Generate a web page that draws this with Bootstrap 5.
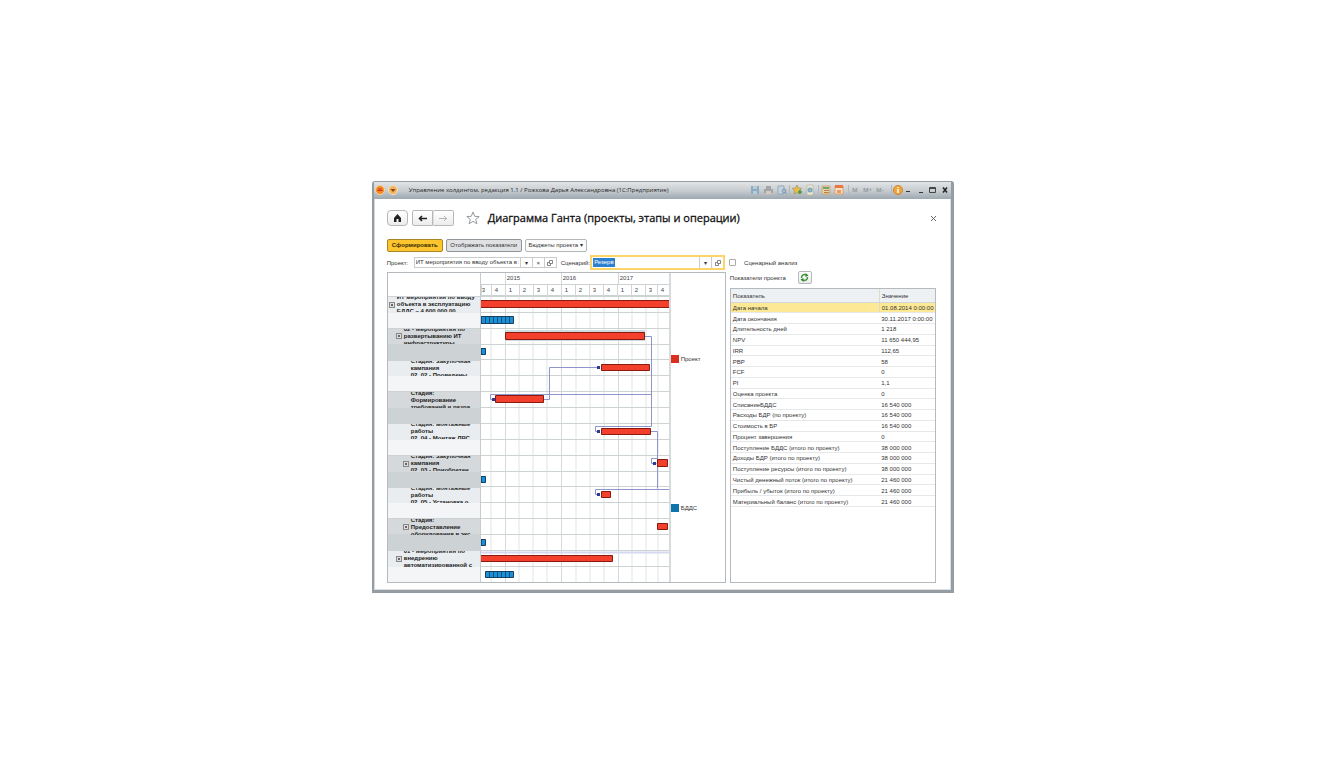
<!DOCTYPE html>
<html lang="ru">
<head>
<meta charset="utf-8">
<meta name="viewport" content="width=device-width, initial-scale=1">
<title>Диаграмма Ганта</title>
<link href="https://cdn.jsdelivr.net/npm/bootstrap@5.3.0/dist/css/bootstrap.min.css" rel="stylesheet">
<script src="https://cdn.jsdelivr.net/npm/bootstrap@5.3.0/dist/js/bootstrap.bundle.min.js"></script>
<style>
body{font:6px/8px "Liberation Sans",Arial,sans-serif;color:#333;background:#fff;padding:2px 0 0 2px}
svg{display:block;flex:none}
button,input{font:inherit;color:inherit}
.win{width:44vw;min-width:582px;border:solid #959da3;border-width:1px 3px 3px 2px;border-radius:3px 3px 0 0;background:#fff;box-shadow:inset -1px -1px #dcdfe1,inset 1px 0 #d5d9dc}
.titlebar{height:17px;padding:0 0 2px 1px;background:linear-gradient(#e2e4e5,#c8cdd1 50%,#9da8b0);color:#222;font-family:"Open Sans","Liberation Sans",sans-serif}
.titlebar button,.plain{border:0;background:none;padding:0}
.page-body{padding:11px 15px 7px 13px}
.tool{height:16px;border:1px solid #b5b9bb;border-radius:2px;background:linear-gradient(#fff,#ececec);padding:0}
.nav-l{width:21px;border-radius:2px 0 0 2px}
.nav-r{width:21px;border-left-color:#ddd;border-radius:0 2px 2px 0}
h1{font-family:"Open Sans","Liberation Sans",sans-serif;font-size:11px;line-height:16px;color:#111;-webkit-text-stroke:.3px #111}
.cmd{height:13px;line-height:11px;border:1px solid #b3b7b9;border-radius:2px;background:#fbfbfb;padding:0 2px;white-space:nowrap}
.cmds{gap:3px;padding-top:13px;margin-bottom:3px}
.cmd-main{width:56px;background:#fdc62f;border-color:#a98524;color:#3a2c00;font-weight:bold}
.cmd-on{width:76px;background:#dfe1e2;border-color:#8f9599}
.cmd-menu{width:62px}
.fieldrow{height:15px;margin-bottom:2px}
.left-col{flex:338 1 0;min-width:0}
.right-col{flex:207 1 0;min-width:0}
.box{height:11px;border:1px solid #c9cccd}
.box input{border:0;outline:0;padding:0 1px;min-width:0;background:none;height:9px;line-height:9px}
.box button{width:12px;border:0;border-left:1px solid #ccc;background:none;padding:0}
.box-active{height:15px;border:2px solid #fbd56a}
.box-active input.picked{height:9px;width:22px;margin:1px;background:#2d7fd0;color:#fff}
.tick{appearance:none;width:7px;height:7px;border:1px solid #aaa;border-radius:1px;margin:0;background:#fff}
.frame{border:1px solid #b4babd}
.names{width:93px;border-right:1px solid #c5cbce}
.names-body,.chart-body{height:286px}
.names-body{display:grid;grid-template-rows:repeat(9,1fr);font-weight:bold;line-height:7px;color:#222}
.grp{background:linear-gradient(#e9edf0 50%,#f3f5f6 50%);border-top:1px solid #cdd2d4;overflow:hidden}
.grp.alt{background:linear-gradient(#d5d9dc 50%,#cdd2d5 50%)}
.grp>div{height:50%;overflow:hidden;white-space:nowrap;gap:2px}
.lv1{padding-left:1px}.lv2{padding-left:8px}.lv3{padding-left:15px}
.leaf{padding-left:23px}
.exp{width:6px;height:6px;border:1px solid #888;background:#ddd;padding:0;flex:none}
.exp::before{content:"";display:block;width:2px;height:2px;margin:1px;background:#666}
.head{height:23px}
.years,.quarters{display:grid;border-bottom:1px solid #ccd1d3;color:#444}
.years{height:12px;grid-template-columns:24fr 56fr 57fr 51fr;line-height:11px}
.quarters{height:11px;grid-template-columns:10fr repeat(11,14fr) 12fr 12fr;line-height:11px}
.years span,.quarters span{border-left:1px solid #d3d7d9;padding-left:1px}
.quarters span{padding-left:3px}
.quarters span:first-child{padding-left:0}
.plot{width:188px}
.legend-col{border-left:2px solid #d7dbdd;padding-top:12px}
.key{width:8px;height:8px;margin-right:2px}
.key-red{background:#d9301d}
.key-blue{background:#0f74ab}
.refresh-row{height:11px;gap:12px;margin-bottom:5px}
.refresh{width:14px;height:13px}
.grid-table{height:218px;border-collapse:collapse;table-layout:fixed}
.grid-table th,.grid-table td{padding:1px 2px 0;border-bottom:1px solid #e6e8e9;white-space:nowrap;line-height:8px;vertical-align:middle;font-weight:normal}
.grid-table th{height:13px;background:#eef1f3;border-bottom-color:#d2d6d8}
.grid-table .cur td{background:#fde995}
.grid-table th+th,.grid-table .cur td+td{border-left:1px solid #dcdcc8}
.grid-table td+td,.grid-table th+th{width:56px}
</style>
</head>
<body class="min-vh-100 d-flex align-items-center justify-content-center">
<main class="win">
<header class="titlebar d-flex align-items-center">
<svg width="26" height="12" viewBox="0 0 26 12"><circle cx="5" cy="6" r="4.500" fill="#f58a25" stroke="#fbd3a2"/><path d="M2.500 6.500h5M3 5h4" stroke="#c9371b"/><circle cx="18" cy="6" r="4.500" fill="#f6b25a" stroke="#f3e2c6"/><path d="M15.500 5h5l-2.500 3z" fill="#7d4715"/></svg>
<span class="text-nowrap ms-1 ps-1 me-auto">Управление холдингом, редакция 1.1 / Рожкова Дарья Александровна (1С:Предприятие)</span>
<svg width="202" height="12" viewBox="0 0 202 12">
<g fill="#8eabc0"><path d="M2 2h8v8H2z"/><path d="M4 2h4v3H4zM4 7h4v3H4z" fill="#b8cbd8"/></g>
<path d="M15 5h9v4h-9zM17 2h5v3h-5z" fill="#a1a6aa"/><path d="M17 7h5v3h-5z" fill="#d9c9ba"/>
<path d="M29 2h6v8h-6z" fill="#c6d4de" stroke="#93a9b8"/><circle cx="35" cy="7" r="2" fill="none" stroke="#7c99ae"/><path d="M36 8l2 2" stroke="#7c99ae"/>
<path d="M40.500 1v10M69.500 1v10M99.500 1v10M142.500 1v10" stroke="#b2b8bc"/>
<path d="M48 1l1.400 3 3.300.4-2.400 2.200.6 3.400L48 8.500 45 10l.6-3.400-2.400-2.200 3.300-.4z" fill="#e9bd4b" stroke="#9c8c45" stroke-width=".6"/><path d="M49 8h4M51 6v4" stroke="#469842" stroke-width="1.500"/>
<path d="M58 1h6v10h-6z" fill="#e9e5d3" stroke="#b9b19a" stroke-width=".6"/><circle cx="61" cy="6" r="2.500" fill="#6eaccb"/><path d="M60 6h2" stroke="#f3ba48"/>
<path d="M73 2h8v8h-8z" fill="#ead5a7" stroke="#c9a878"/><path d="M74 3h6v2h-6z" fill="#71a269"/><path d="M75 6.500h5M75 8.500h5" stroke="#ba7e51"/>
<path d="M86 2h8v8h-8z" fill="#f6e2c6" stroke="#e09f6c"/><path d="M86 1h8v3h-8z" fill="#e9773e"/><path d="M88 6h4v3h-4z" fill="#e79b60"/>
<g font-size="6" font-weight="bold" fill="#969b9e"><text x="103" y="8">M</text><text x="114" y="8">M+</text><text x="127" y="8">M-</text></g>
<circle cx="149" cy="6" r="4.500" fill="#efa53a" stroke="#d08332"/><path d="M149 3v1M149 5v4" stroke="#fff" stroke-width="1.500"/><path d="M157 7.500h4M170 8.500h4" stroke="#333" stroke-width="1.200"/><path d="M180.500 3.500h6v5h-6zM180 4.500h7" fill="none" stroke="#444"/><path d="M194 3.500l4 5M198 3.500l-4 5" stroke="#222" stroke-width="1.500"/></svg>
</header>
<div class="page-body">
<div class="d-flex align-items-center me-n1">
<button class="tool nav-l rounded-1 d-flex align-items-center justify-content-center" aria-label="Домой"><svg width="9" height="8" viewBox="0 0 9 8"><path d="M1 4L4.500 0 8 4v4H5.500V5h-2v3H1z" fill="#222"/></svg></button>
<button class="tool nav-l ms-1 d-flex align-items-center justify-content-center" aria-label="Назад"><svg width="9" height="7" viewBox="0 0 9 7"><path d="M9 3.500H2M4 1L1.500 3.500 4 6" fill="none" stroke="#222" stroke-width="1.600"/></svg></button>
<button class="tool nav-r d-flex align-items-center justify-content-center" aria-label="Вперед"><svg width="9" height="7" viewBox="0 0 9 7"><path d="M0 3.500h7.500M5 1l2.500 2.500L5 6" fill="none" stroke="#b5b5b5"/></svg></button>
<button class="plain ms-2 ps-1" aria-label="В избранное"><svg width="14" height="14" viewBox="0 0 14 14"><path d="M7 1l1.700 4.300 4.500.3-3.500 2.800 1.200 4.400L7 10.300l-3.900 2.500 1.200-4.400L.8 5.600l4.500-.3z" fill="#fff" stroke="#8a9197" stroke-width=".9"/></svg></button>
<h1 class="mb-0 ms-2 me-auto fw-normal text-nowrap">Диаграмма Ганта (проекты, этапы и операции)</h1>
<button class="plain" aria-label="Закрыть"><svg width="5" height="5" viewBox="0 0 5 5"><path d="M0 0l5 5M5 0L0 5" stroke="#666"/></svg></button>
</div>
<div class="d-flex cmds">
<button class="cmd cmd-main">Сформировать</button>
<button class="cmd cmd-on">Отображать показатели</button>
<button class="cmd cmd-menu">Бюджеты проекта ▾</button>
</div>
<div class="d-flex gap-1 fieldrow">
<div class="left-col d-flex align-items-center">
<label for="prj" style="flex:0 0 27px">Проект:</label>
<div class="box d-flex" style="flex:0 0 143px"><input id="prj" class="flex-grow-1" value="ИТ мероприятия по вводу объекта в эксплуатацию"><button aria-label="Выбрать">▾</button><button aria-label="Очистить">×</button><button class="d-flex align-items-center justify-content-center" aria-label="Открыть"><svg width="6" height="6" viewBox="0 0 6 6"><path d="M2.500.5h3v3h-3zM2 2.500H.5v3h3V4" fill="none" stroke="#666" stroke-width=".8"/></svg></button></div>
<label for="scn" class="ms-1">Сценарий:</label>
<div class="box box-active d-flex ms-auto" style="flex:0 0 135px"><input id="scn" class="picked" value="Резерв"><button class="ms-auto" aria-label="Выбрать">▾</button><button class="d-flex align-items-center justify-content-center" aria-label="Открыть"><svg width="6" height="6" viewBox="0 0 6 6"><path d="M2.500.5h3v3h-3zM2 2.500H.5v3h3V4" fill="none" stroke="#666" stroke-width=".8"/></svg></button></div>
</div>
<div class="right-col d-flex align-items-center gap-2"><input type="checkbox" class="tick" id="sa"><label for="sa">Сценарный анализ</label></div>
</div>
<div class="d-flex gap-1">
<section class="left-col frame d-flex">
<div class="names flex-shrink-0"><div class="head"></div>
<div class="names-body">
<div class="grp"><div class="d-flex align-items-center lv1"><button class="exp" aria-label="Свернуть"></button><span>ИТ мероприятия по вводу<br>объекта в эксплуатацию<br>БДДС – 4 600 000.00</span></div></div>
<div class="grp alt"><div class="d-flex align-items-center lv2"><button class="exp" aria-label="Свернуть"></button><span>02 - Мероприятия по<br>развертыванию ИТ<br>инфраструктуры</span></div></div>
<div class="grp"><div class="d-flex align-items-center leaf"><span>Стадия: Закупочная<br>кампания<br>02. 02 - Проведены</span></div></div>
<div class="grp alt"><div class="d-flex align-items-center leaf"><span>Стадия:<br>Формирование<br>требований и разра</span></div></div>
<div class="grp"><div class="d-flex align-items-center leaf"><span>Стадия: монтажные<br>работы<br>02. 04 - Монтаж ЛВС</span></div></div>
<div class="grp alt"><div class="d-flex align-items-center lv3"><button class="exp" aria-label="Развернуть"></button><span>Стадия: Закупочная<br>кампания<br>02. 03 - Приобретен</span></div></div>
<div class="grp"><div class="d-flex align-items-center leaf"><span>Стадия: монтажные<br>работы<br>02. 05 - Установка о</span></div></div>
<div class="grp alt"><div class="d-flex align-items-center lv3"><button class="exp" aria-label="Развернуть"></button><span>Стадия:<br>Предоставление<br>оборудования в экс</span></div></div>
<div class="grp"><div class="d-flex align-items-center lv2"><button class="exp" aria-label="Развернуть"></button><span>01 - Мероприятия по<br>внедрению<br>автоматизированной с</span></div></div>
</div></div>
<div class="plot flex-shrink-0">
<div class="head"><div class="years"><span class="border-0"></span><span>2015</span><span>2016</span><span>2017</span></div>
<div class="quarters"><span>3</span><span>4</span><span>1</span><span>2</span><span>3</span><span>4</span><span>1</span><span>2</span><span>3</span><span>4</span><span>1</span><span>2</span><span>3</span><span>4</span></div></div>
<svg class="chart-body" width="188" height="286" viewBox="0 0 188 286">
<defs><pattern id="cells" width="4" height="8" patternUnits="userSpaceOnUse"><path d="M0 0h4v8H0z" fill="#1b90d6"/><path d="M0 0v8" stroke="#0b3d63" stroke-width="1.500"/></pattern></defs>
<path d="M10 0v286M38 0v286M52 0v286M66 0v286M95 0v286M109 0v286M123 0v286M151 0v286M165 0v286M177 0v286" stroke="#f0f1f1" stroke-width="2"/>
<path d="M24.500 0v286M80.500 0v286M137.500 0v286" stroke="#d5d9da"/>
<path d="M0 .5h188M0 16.500h188M0 32.500h188M0 48.500h188M0 63.500h188M0 79.500h188M0 95.500h188M0 111.500h188M0 127.500h188M0 143.500h188M0 159.500h188M0 175.500h188M0 190.500h188M0 206.500h188M0 222.500h188M0 238.500h188M0 254.500h188M0 270.500h188" stroke="#cdd2d3"/>
<path d="M24 34h140v11H24z" fill="#cddae0"/>
<path d="M0 256.500h188" stroke="#d5d8ef" stroke-width="2"/>
<g fill="none" stroke="#8d95cb"><path d="M164 40.500h6.500v90H114.500v5h4M170.500 98.500H9.500v5h4M63 103.500h5.500v-32h50M170 135.500h6.500v57M176.500 162.500h-6v5h5M188 193.500h-73.500v5h4"/></g>
<path d="M116 134h3v3h-3zM11 102h3v3h-3zM116 70h3v3h-3zM172 166h3v3h-3zM116 197h3v3h-3z" fill="#2a3b9c"/>
<g fill="#f2402c" stroke="#8a1a0f"><path d="M-1 4.500h190v7H-1z"/><path d="M24.500 36.500h139v7h-139zM120.500 68.500h48v6h-48zM14.500 99.500h48v7h-48zM120.500 132.500h49v6h-49zM176.500 163.500h10v7h-10zM120.500 195.500h9v6h-9zM176.500 227.500h10v6h-10zM-1 259.500h132.500v6H-1z"/></g>
<g fill="url(#cells)" stroke="#16405f"><path d="M-.5 20.500h33v7h-33zM-.5 52.500h5v6h-5zM-.5 180.500h5v6h-5zM-.5 243.500h5v6h-5zM4.500 275.500h28v6h-28z"/></g>
</svg></div>
<div class="legend-col flex-grow-1 d-flex flex-column justify-content-around"><div class="d-flex align-items-center"><i class="key key-red"></i><span>Проект</span></div><div class="d-flex align-items-center"><i class="key key-blue"></i><span>БДДС</span></div></div>
</section>
<section class="right-col d-flex flex-column">
<div class="d-flex align-items-center refresh-row"><span>Показатели проекта</span><button class="tool refresh d-flex align-items-center justify-content-center" aria-label="Обновить"><svg width="9" height="9" viewBox="0 0 9 9"><path d="M1.500 5A3 3 0 0 1 6 2M7.500 4A3 3 0 0 1 3 7" fill="none" stroke="#3d9a35" stroke-width="1.400"/><path d="M5.500 0v4l3-1.500zM3.500 9V5l-3 1.500z" fill="#2d8228"/></svg></button></div>
<div class="frame flex-grow-1">
<table class="grid-table w-100">
<thead><tr><th>Показатель</th><th>Значение</th></tr></thead>
<tbody>
<tr class="cur"><td>Дата начала</td><td>01.08.2014 0:00:00</td></tr>
<tr><td>Дата окончания</td><td>30.11.2017 0:00:00</td></tr>
<tr><td>Длительность дней</td><td>1 218</td></tr>
<tr><td>NPV</td><td>11 650 444,95</td></tr>
<tr><td>IRR</td><td>112,65</td></tr>
<tr><td>PBP</td><td>58</td></tr>
<tr><td>FCF</td><td>0</td></tr>
<tr><td>PI</td><td>1,1</td></tr>
<tr><td>Оценка проекта</td><td>0</td></tr>
<tr><td>СписаниеБДДС</td><td>16 540 000</td></tr>
<tr><td>Расходы БДР (по проекту)</td><td>16 540 000</td></tr>
<tr><td>Стоимость в БР</td><td>16 540 000</td></tr>
<tr><td>Процент завершения</td><td>0</td></tr>
<tr><td>Поступление БДДС (итого по проекту)</td><td>38 000 000</td></tr>
<tr><td>Доходы БДР (итого по проекту)</td><td>38 000 000</td></tr>
<tr><td>Поступление ресурсы (итого по проекту)</td><td>38 000 000</td></tr>
<tr><td>Чистый денежный поток (итого по проекту)</td><td>21 460 000</td></tr>
<tr><td>Прибыль / убыток (итого по проекту)</td><td>21 460 000</td></tr>
<tr><td>Материальный баланс (итого по проекту)</td><td>21 460 000</td></tr>
</tbody></table></div>
</section>
</div>
</div>
</main>
</body>
</html>
